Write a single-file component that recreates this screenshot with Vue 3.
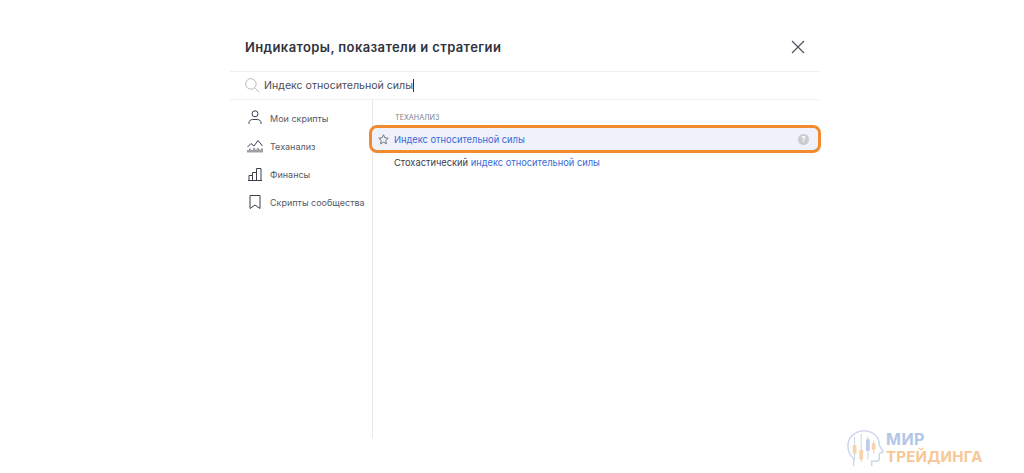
<script setup>
const navItems = [
  { label: 'Мои скрипты', icon: 'user' },
  { label: 'Теханализ', icon: 'chart' },
  { label: 'Финансы', icon: 'bars' },
  { label: 'Скрипты сообщества', icon: 'bookmark' },
]
</script>

<template>
  <div class="page">
    <div class="dialog">
      <header class="head">
        <h1 class="title">Индикаторы, показатели и стратегии</h1>
        <svg class="close" width="14" height="14" viewBox="0 0 14 14" fill="none" stroke="#4a4e59" stroke-width="1.1">
          <path d="M1 1l12 12M13 1L1 13" />
        </svg>
      </header>
      <div class="search">
        <svg width="15" height="15" viewBox="0 0 16 16" fill="none" stroke="#b4b7bd" stroke-width="1">
          <circle cx="6.300" cy="6.300" r="5.600" />
          <path d="M10.300 10.300l4.900 4.900" />
        </svg>
        <span class="query">Индекс относительной силы</span><span class="caret"></span>
      </div>
      <div class="body">
        <nav class="side">
          <div v-for="item in navItems" :key="item.label" class="nav-item">
            <svg class="nav-icon" width="18" height="18" viewBox="0 0 18 18" fill="none" stroke="#3c404b" stroke-width="1">
              <template v-if="item.icon === 'user'">
                <circle cx="9" cy="4.800" r="3" />
                <path d="M3 15v-1.300c0-2 1.800-3.200 3.800-3.200h4.400c2 0 3.800 1.200 3.800 3.200V15" />
              </template>
              <template v-else-if="item.icon === 'chart'">
                <path d="M1.500 10l3.500-3.500 3 2.500 4-5.500 4.500 5.500" />
                <path d="M2 15.500v-2.500M4 15.500v-4M6 15.500v-2.500M8 15.500v-4.500M10 15.500v-3M12 15.500v-4.500M14 15.500v-3M16 15.500v-4" />
              </template>
              <template v-else-if="item.icon === 'bars'">
                <path d="M2 15.500h14M3 15.500v-5h3.500v5M6.500 15.500v-8h4v8M10.500 15.500v-12h4.500v12" />
              </template>
              <template v-else>
                <path d="M4 2.500h10v13l-5-3.500-5 3.500z" />
              </template>
            </svg>
            <span>{{ item.label }}</span>
          </div>
        </nav>
        <main class="results">
          <div class="section">ТЕХАНАЛИЗ</div>
          <div class="row active">
            <svg class="star" width="11" height="11" viewBox="0 0 14 14" fill="none" stroke="#6a6d78" stroke-width="1.200">
              <path d="M7 1l1.800 3.900 4.200.5-3.100 2.900.8 4.200L7 10.400l-3.700 2.100.8-4.200L1 5.400l4.200-.5z" />
            </svg>
            <span class="hit">Индекс относительной силы</span>
            <span class="help">?</span>
          </div>
          <div class="row plain">
            <span>Стохастический&nbsp;</span><span class="hit">индекс относительной силы</span>
          </div>
        </main>
      </div>
    </div>
    <div class="logo">
      <svg width="40" height="40" viewBox="0 0 42 40" fill="none">
        <path d="M8 39v-8c-4-3-6-7-6-13C2 8 10 2 19 2c9 0 16 6 16 15l4 7-4 2v5c0 2-2 3-4 3h-4v5" stroke="#c9d6ec" stroke-width="1.500" />
        <path d="M9 8v24M16 5v30M23 8v24M29 12v14" stroke="#c7d4ea" stroke-width="1" />
        <rect x="7" y="17" width="4" height="9" fill="#f9d3ae" />
        <rect x="14" y="22" width="4" height="10" fill="#f9d3ae" />
        <rect x="21" y="11" width="4" height="12" fill="#bccdeb" />
        <rect x="27" y="15" width="4" height="7" fill="#f9d3ae" />
      </svg>
      <div class="logo-text">
        <div class="logo-top">МИР</div>
        <div class="logo-bottom">ТРЕЙДИНГА</div>
      </div>
    </div>
  </div>
</template>

<style>
html, body { margin: 0; background: #fff; }
</style>

<style scoped>
.page {
  position: relative;
  width: 1024px;
  height: 473px;
  overflow: hidden;
  background: #fff;
  font-family: Inter, "Noto Sans", sans-serif;
  color: #3c404b;
  display: flex;
}
.dialog {
  width: 589px;
  margin-left: 230px;
  height: 438px;
  display: flex;
  flex-direction: column;
}
.head {
  height: 72px;
  flex: none;
  display: flex;
  align-items: center;
  justify-content: space-between;
  padding: 22px 14px 0 15px;
  box-sizing: border-box;
  border-bottom: 1px solid #eeeff1;
}
.title {
  margin: 0;
  font-size: 13px;
  font-weight: 600;
  color: #30333c;
  letter-spacing: 0.39px;
}
.search {
  height: 28px;
  box-sizing: border-box;
  flex: none;
  display: flex;
  align-items: center;
  padding: 0 0 0 15px;
  border-bottom: 1px solid #eeeff1;
  font-size: 10.6px;
}
.query { margin-left: 4px; color: #4a4e59; }
.caret { width: 1px; height: 13px; background: #30333c; }
.body { flex: 1; display: flex; min-height: 0; }
.side {
  width: 143px;
  flex: none;
  box-sizing: border-box;
  padding-top: 4px;
  border-right: 1px solid #e6e7ea;
}
.nav-item {
  height: 28px;
  display: flex;
  align-items: center;
  padding-left: 16px;
  font-size: 9px;
  color: #565a65;
  white-space: nowrap;
}
.nav-icon { margin-right: 6px; flex: none; }
.results { flex: 1; min-width: 0; padding-top: 12px; }
.section {
  padding-left: 22px;
  font-size: 7.2px;
  line-height: 11px;
  color: #80838c;
  margin-bottom: 2px;
}
.row {
  display: flex;
  align-items: center;
  font-size: 9.3px;
  white-space: nowrap;
}
.active {
  height: 22px;
  margin: 0 -2px 0 -4px;
  padding: 0 9px 0 6px;
  background: #eff2fa;
  border: 3px solid #f28a30;
  border-radius: 8px;
}
.plain { height: 19px; padding-left: 21px; color: #3c404b; }
.star { margin-right: 5px; flex: none; }
.hit { color: #3a69d6; }
.help {
  margin-left: auto;
  width: 11px;
  height: 11px;
  border-radius: 50%;
  background: #c9cbd0;
  color: #fff;
  font-size: 8px;
  font-weight: 700;
  line-height: 11px;
  text-align: center;
}
.logo {
  position: absolute;
  left: 846px;
  top: 428px;
  display: flex;
  align-items: center;
  gap: 0;
  font-family: Inter, sans-serif;
  font-weight: 700;
}
.logo-text { line-height: 17px; font-size: 15px; letter-spacing: 0.25px; }
.logo-top { color: #b3c6e8; font-size: 16px; letter-spacing: 0.5px; }
.logo-bottom { color: #f7c795; }
</style>
